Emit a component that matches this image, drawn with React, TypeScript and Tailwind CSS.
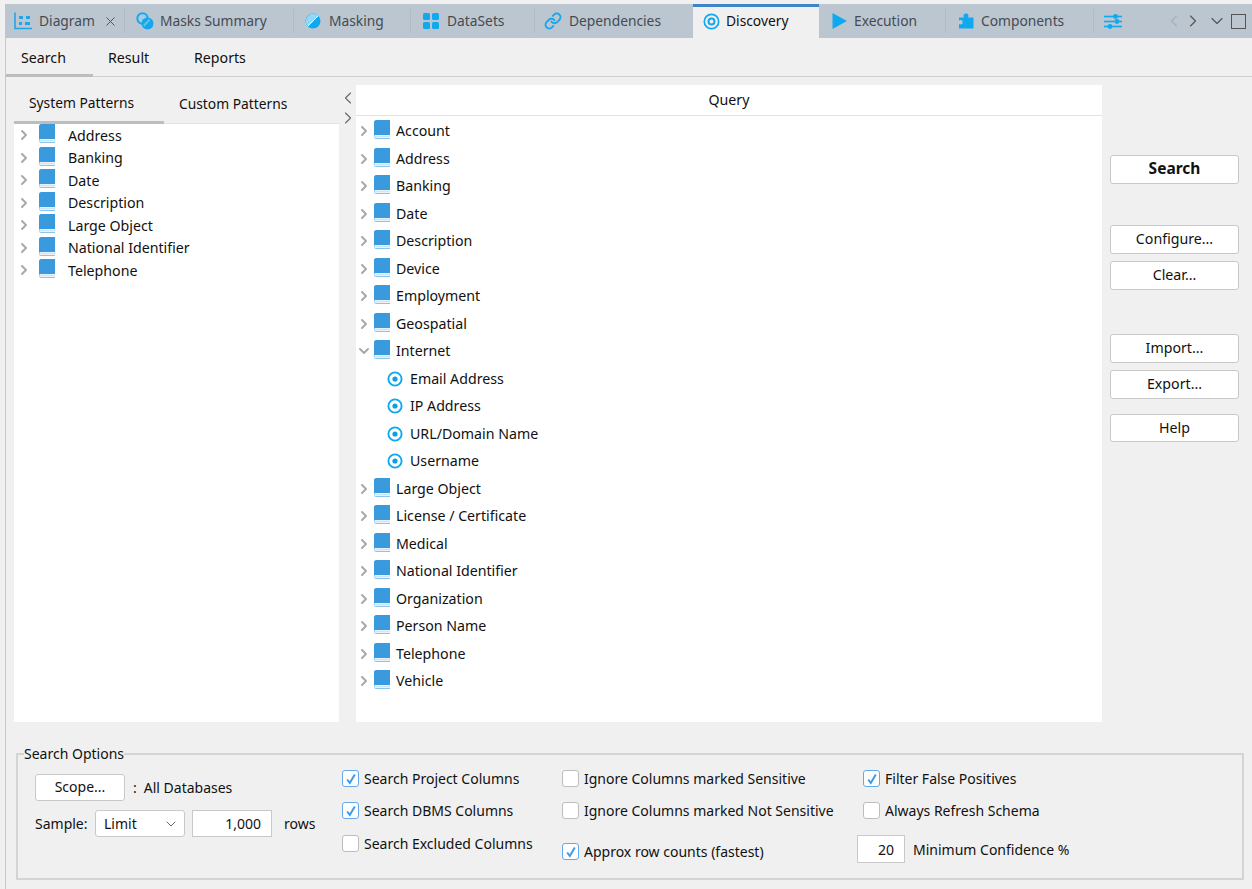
import { ChevronDown, ChevronLeft, ChevronRight, X } from "lucide-react"
import type { ReactNode } from "react"

const DiagramIcon = () => (
  <svg width="18" height="18" viewBox="0 0 18 18" fill="none">
    <path d="M1 0.5V16.5H18" stroke="#1ea7e8" strokeWidth="1.6" />
    <rect x="5" y="4" width="4" height="3" fill="#1ea7e8" />
    <rect x="12" y="4" width="4" height="3" fill="#1ea7e8" />
    <rect x="5" y="10" width="3" height="3" fill="#1ea7e8" />
    <rect x="11" y="10" width="5" height="3" fill="#1ea7e8" />
  </svg>
)

const MasksIcon = () => (
  <svg width="18" height="18" viewBox="0 0 18 18">
    <circle cx="6.5" cy="6.5" r="5.2" fill="none" stroke="#1ea7e8" strokeWidth="2" />
    <path d="M3 7.5 L8 2.5 L10 4 L5 9Z" fill="#8fd2f5" />
    <circle cx="11.5" cy="11.5" r="6" fill="#0fa9f0" />
    <path d="M7 13 L13 7 L14.5 8 L8.5 14.5Z" fill="#bcc6d1" opacity="0.6" />
  </svg>
)

const MaskingIcon = () => (
  <svg width="16" height="16" viewBox="0 0 16 16">
    <circle cx="8" cy="8" r="7.5" fill="#0fa9f0" />
    <path d="M2.7 13.3 L13.3 2.7 A7.5 7.5 0 0 0 2.7 13.3Z" fill="#8fd8f8" />
    <path d="M2.7 13.3 L13.3 2.7" stroke="#ffffff" strokeWidth="1" />
  </svg>
)

const DataSetsIcon = () => (
  <svg width="16" height="16" viewBox="0 0 16 16" fill="#0fa9f0">
    <rect x="0" y="0" width="7" height="7" rx="1.5" />
    <rect x="9" y="0" width="7" height="7" rx="1.5" />
    <rect x="0" y="9" width="7" height="7" rx="1.5" />
    <rect x="9" y="9" width="7" height="7" rx="1.5" />
  </svg>
)

const LinkIcon = () => (
  <svg width="18" height="18" viewBox="0 0 24 24" fill="none" stroke="#0fa9f0" strokeWidth="2.6" strokeLinecap="round" strokeLinejoin="round">
    <path d="M10 13a5 5 0 0 0 7.54.54l3-3a5 5 0 0 0-7.07-7.07l-1.72 1.71" />
    <path d="M14 11a5 5 0 0 0-7.54-.54l-3 3a5 5 0 0 0 7.07 7.07l1.71-1.71" />
  </svg>
)

const DiscoveryIcon = () => (
  <svg width="17" height="17" viewBox="0 0 17 17" fill="none">
    <circle cx="8.5" cy="8.5" r="7.2" stroke="#0fa9f0" strokeWidth="1.7" />
    <circle cx="8.5" cy="8.5" r="3" stroke="#0fa9f0" strokeWidth="2" />
  </svg>
)

const PlayIcon = () => (
  <svg width="15" height="16" viewBox="0 0 15 16">
    <path d="M0.5 0L15 8L0.5 16Z" fill="#0fa9f0" />
  </svg>
)

const PuzzleIcon = () => (
  <svg width="15" height="16" viewBox="0 0 15 16">
    <path d="M0 4.5H5C4 3 4.5 0.5 7 0.5S10 3 9 4.5H14.5V15.5H0V11C2 12 3.7 11 3.7 9.2S2 6.5 0 7.5Z" fill="#0fa9f0" />
  </svg>
)

const SlidersIcon = () => (
  <svg width="18" height="15" viewBox="0 0 18 15" fill="#0fa9f0">
    <rect x="0" y="1.7" width="18" height="1.6" />
    <rect x="0" y="6.7" width="18" height="1.6" />
    <rect x="0" y="11.7" width="18" height="1.6" />
    <circle cx="11.5" cy="2.5" r="2.4" />
    <circle cx="13" cy="7.5" r="2.4" />
    <circle cx="6" cy="12.5" r="2.4" />
  </svg>
)

const BookIcon = () => (
  <svg width="16" height="19" viewBox="0 0 16 19" className="shrink-0">
    <path d="M2 0H16V15H2C1 15 0 15.5 0 16.5V2C0 1 1 0 2 0Z" fill="#3a9ade" />
    <path d="M0.5 16.5C0.5 15.8 1.2 15.5 2 15.5H16V17.5H2C1.2 17.5 0.5 17.2 0.5 16.5Z" fill="#cfe6f7" />
    <path d="M0 16V17C0 18 1 18.5 2 18.5H16" fill="none" stroke="#8cc4ec" strokeWidth="1" />
  </svg>
)

const RadioIcon = () => (
  <svg width="16" height="16" viewBox="0 0 16 16" fill="none" className="shrink-0">
    <circle cx="8" cy="8" r="6.6" stroke="#0fa9f0" strokeWidth="1.9" />
    <circle cx="8" cy="8" r="2.6" fill="#0f9fe0" />
  </svg>
)

type TabProps = {
  icon: ReactNode
  label?: string
  width: string
  gap: string
  active?: boolean
  separator?: boolean
  close?: boolean
}

const Tab = ({ icon, label, width, gap, active, separator, close }: TabProps) => (
  <div
    className={`relative flex h-full shrink-0 items-center ${width} ${gap} ${
      active ? "border-t-[3px] border-[#3d85c6] bg-[#f0f0f0] pb-[3px] text-[#111]" : "text-[#444b52]"
    }`}
  >
    <span className="flex w-[18px] shrink-0 items-center justify-center">{icon}</span>
    {label && <span className="whitespace-nowrap">{label}</span>}
    {close && <X className="ml-[1px] size-[15px] text-[#555]" strokeWidth={1.6} />}
    {separator && <span className="absolute top-[5px] right-0 h-6 w-px bg-[#b0bac6]" />}
  </div>
)

const PATTERNS = ["Address", "Banking", "Date", "Description", "Large Object", "National Identifier", "Telephone"]

const Arrow = ({ open }: { open?: boolean }) =>
  open ? (
    <ChevronDown className="size-[16px] shrink-0 text-[#a9a9a9]" strokeWidth={3} />
  ) : (
    <ChevronRight className="size-[16px] shrink-0 text-[#a9a9a9]" strokeWidth={3} />
  )

const QUERY_TOP = ["Account", "Address", "Banking", "Date", "Description", "Device", "Employment", "Geospatial"]
const QUERY_CHILDREN = ["Email Address", "IP Address", "URL/Domain Name", "Username"]
const QUERY_BOTTOM = [
  "Large Object",
  "License / Certificate",
  "Medical",
  "National Identifier",
  "Organization",
  "Person Name",
  "Telephone",
  "Vehicle",
]

const QueryRow = ({ label, open }: { label: string; open?: boolean }) => (
  <div className="flex h-[27.5px] items-center">
    <Arrow open={open} />
    <span className="mb-[3px] ml-[2px]">
      <BookIcon />
    </span>
    <span className="ml-[6px]">{label}</span>
  </div>
)

const Button = ({ children, className }: { children: ReactNode; className?: string }) => (
  <button
    type="button"
    className={`flex w-[129px] items-center justify-center rounded-[3px] border border-[#c9c9c9] bg-white pb-[2px] text-[#111] ${className ?? "h-[28px]"}`}
  >
    {children}
  </button>
)

const Check = ({ label, checked, className }: { label: string; checked?: boolean; className?: string }) => (
  <label className={`flex items-center gap-[5px] whitespace-nowrap ${className ?? ""}`}>
    <span
      className={`flex size-[17px] shrink-0 items-center justify-center rounded-[3px] border-[1.5px] bg-white ${
        checked ? "border-[#63a9ec]" : "border-[#bdbdbd]"
      }`}
    >
      {checked && (
        <svg width="12" height="12" viewBox="0 0 12 12" fill="none">
          <path d="M2.2 6.5L4.8 10L9.8 1.5" stroke="#3f9be8" strokeWidth="2" />
        </svg>
      )}
    </span>
    {label}
  </label>
)

export default function App() {
  return (
    <div
      className="flex h-[889px] w-[1252px] flex-col overflow-hidden bg-[#f0f0f0] pt-1 text-[14.2px] text-[#111]"
      style={{ fontFamily: '"Noto Sans", "Open Sans", sans-serif' }}
    >
      <div className="ml-[5px] flex h-[34px] shrink-0 items-center bg-[#bcc6d1] text-[13.8px]">
        <Tab icon={<DiagramIcon />} label="Diagram" width="w-[120px] pl-[9px]" gap="gap-[7px]" close separator />
        <Tab icon={<MasksIcon />} label="Masks Summary" width="w-[169px] pl-[11px]" gap="gap-[6px]" separator />
        <Tab icon={<MaskingIcon />} label="Masking" width="w-[117px] pl-[10px]" gap="gap-[7px]" separator />
        <Tab icon={<DataSetsIcon />} label="DataSets" width="w-[124px] pl-[11px]" gap="gap-[7px]" separator />
        <Tab icon={<LinkIcon />} label="Dependencies" width="w-[158px] pl-[9px]" gap="gap-[7px]" />
        <Tab icon={<DiscoveryIcon />} label="Discovery" width="w-[126px] pl-[9px]" gap="gap-[6px]" active />
        <Tab icon={<PlayIcon />} label="Execution" width="w-[127px] pl-[11px]" gap="gap-[6px]" separator />
        <Tab icon={<PuzzleIcon />} label="Components" width="w-[148px] pl-[11px]" gap="gap-[6px]" separator />
        <Tab icon={<SlidersIcon />} width="w-[70px] pl-[10px]" gap="gap-0" />
        <ChevronLeft className="size-[20px] text-[#a7afb8]" strokeWidth={1.4} />
        <ChevronRight className="-ml-px size-[20px] text-[#555]" strokeWidth={1.4} />
        <ChevronDown className="ml-[4px] size-[20px] text-[#555]" strokeWidth={1.4} />
        <span className="ml-[4px] size-[15px] border border-[#555]" />
      </div>

      <div className="ml-[5px] flex min-h-0 flex-1 flex-col border-l border-[#c8c8c8]">
        <div className="flex h-[39px] shrink-0 items-stretch border-b border-[#cfcfcf]">
          <div className="-mb-px flex w-[87px] items-center border-b-[3px] border-[#bdbdbd] pt-[3px] pl-[15px]">Search</div>
          <div className="flex w-[85px] items-center pt-[2px] pl-[15px]">Result</div>
          <div className="flex w-[98px] items-center pt-[2px] pl-[16px]">Reports</div>
        </div>

        <div className="flex h-[645px] shrink-0 pt-2 pl-2">
          <div className="flex w-[325px] flex-col">
            <div className="flex h-[39px] shrink-0 border-b border-[#e3e3e3] text-[13.8px]">
              <div className="-mb-px flex w-[150px] items-center border-b-[3px] border-[#bdbdbd] pl-[15px]">
                System Patterns
              </div>
              <div className="flex w-[138px] items-center pl-[15px]">Custom Patterns</div>
            </div>
            <div className="flex-1 bg-white pl-[2px]">
              {PATTERNS.map((item) => (
                <div key={item} className="flex h-[22.5px] items-center">
                  <Arrow />
                  <span className="mb-[3px] ml-[7px]">
                    <BookIcon />
                  </span>
                  <span className="ml-[13px]">{item}</span>
                </div>
              ))}
            </div>
          </div>

          <div className="flex w-[17px] shrink-0 flex-col items-center pt-[3px] text-[#666]">
            <ChevronLeft className="size-5" strokeWidth={1.3} />
            <ChevronRight className="size-5" strokeWidth={1.3} />
          </div>

          <div className="flex w-[746px] flex-col bg-white">
            <div className="flex h-[31px] shrink-0 items-center justify-center border-b border-[#e3e3e3]">Query</div>
            <div className="pt-[1.4px]">
              {QUERY_TOP.map((item) => (
                <QueryRow key={item} label={item} />
              ))}
              <QueryRow label="Internet" open />
              {QUERY_CHILDREN.map((item) => (
                <div key={item} className="flex h-[27.5px] items-center pl-[31px]">
                  <RadioIcon />
                  <span className="ml-[7px]">{item}</span>
                </div>
              ))}
              {QUERY_BOTTOM.map((item) => (
                <QueryRow key={item} label={item} />
              ))}
            </div>
          </div>

          <div className="flex w-[137px] shrink-0 flex-col pt-[70px] pl-2">
            <Button className="h-[29px] text-[15.5px] font-bold">Search</Button>
            <Button className="mt-[41px] h-[29px]">Configure...</Button>
            <Button className="mt-[7px] h-[29px]">Clear...</Button>
            <Button className="mt-[44px] h-[29px]">Import...</Button>
            <Button className="mt-[7px] h-[29px]">Export...</Button>
            <Button className="mt-[15px] h-[28px] !pb-0">Help</Button>
          </div>
        </div>

        <fieldset className="mt-[21px] ml-[10px] h-[137px] w-[1228px] shrink-0 border-2 border-[#d4d4d4] pl-[17px] text-[14px]">
          <legend className="-ml-[11px] px-0 text-[#111]">Search Options</legend>
          <div className="flex">
            <div className="flex w-[307px] shrink-0 flex-col">
              <div className="mt-[10px] flex items-center">
                <Button className="h-[27px] !w-[90px]">Scope...</Button>
                <span className="ml-[8px]">:</span>
                <span className="ml-[7px]">All Databases</span>
              </div>
              <div className="mt-[9px] flex items-center">
                <span className="w-[60px]">Sample:</span>
                <div className="flex h-[27px] w-[90px] items-center justify-between rounded-[3px] border border-[#c9c9c9] bg-white pr-[5px] pl-2">
                  Limit
                  <ChevronDown className="size-4 text-[#666]" strokeWidth={1.5} />
                </div>
                <div className="ml-[7px] flex h-[27px] w-[80px] items-center justify-end border border-[#c9c9c9] bg-white pr-[10px]">
                  1,000
                </div>
                <span className="ml-3">rows</span>
              </div>
            </div>
            <div className="flex w-[220px] shrink-0 flex-col pt-[4px]">
              <Check label="Search Project Columns" checked />
              <Check label="Search DBMS Columns" checked className="mt-[11px]" />
              <Check label="Search Excluded Columns" className="mt-[12px]" />
            </div>
            <div className="flex w-[301px] shrink-0 flex-col pt-[4px]">
              <Check label="Ignore Columns marked Sensitive" />
              <Check label="Ignore Columns marked Not Sensitive" className="mt-[11px]" />
              <Check label="Approx row counts (fastest)" checked className="mt-[20px]" />
            </div>
            <div className="flex flex-col pt-[4px]">
              <Check label="Filter False Positives" checked />
              <Check label="Always Refresh Schema" className="mt-[11px]" />
              <div className="mt-[14px] -ml-[6px] flex items-center">
                <div className="flex h-[28px] w-[48px] items-center justify-end border border-[#c9c9c9] bg-white pr-[10px]">
                  20
                </div>
                <span className="ml-2">Minimum Confidence %</span>
              </div>
            </div>
          </div>
        </fieldset>
      </div>
    </div>
  )
}
